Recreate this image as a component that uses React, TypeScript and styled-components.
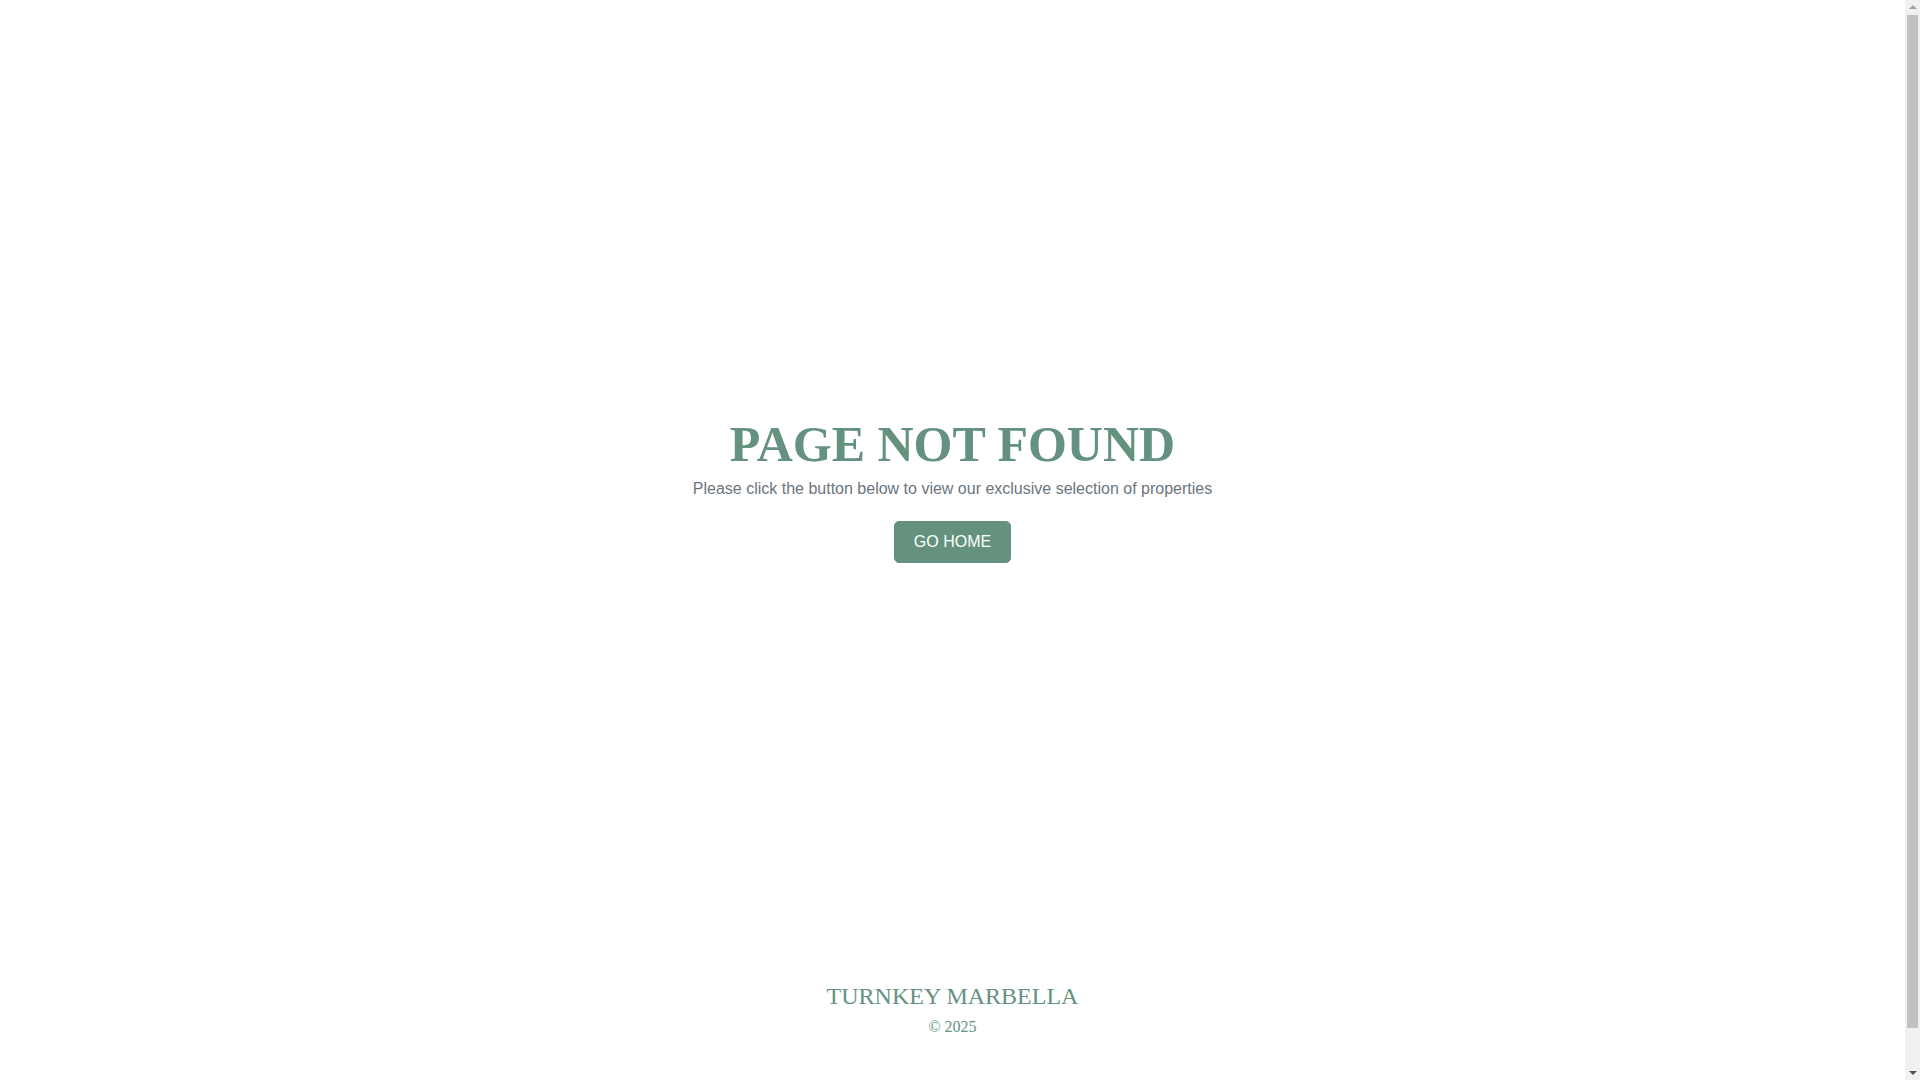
import styled, { createGlobalStyle } from "styled-components"

const GlobalStyle = createGlobalStyle`
    html, body {
        margin: 0;
        padding: 0;
        background: #ffffff;
    }
    body {
        font-family: "Liberation Sans", Arial, sans-serif;
        padding-right: 15px;
    }
`

const green = "#64927f"

const Page = styled.div`
    display: flex;
    flex-direction: column;
    min-height: 1120px;
`

const Main = styled.main`
    display: flex;
    flex-direction: column;
    align-items: center;
    padding: 414px 0 371px;
    text-align: center;
`

const Title = styled.h1`
    margin: 0;
    font-family: "Liberation Serif", "Times New Roman", serif;
    font-weight: 700;
    font-size: 50px;
    line-height: 1.2;
    color: ${green};
`

const Lead = styled.p`
    margin: 3px 0 20px;
    font-size: 16px;
    line-height: 24px;
    color: #6c757d;
`

const HomeButton = styled.a`
    display: inline-block;
    padding: 8px 19px;
    font-size: 16px;
    line-height: 24px;
    color: #ffffff;
    background: ${green};
    border: 1px solid ${green};
    border-radius: 5px;
    text-decoration: none;
    cursor: pointer;
`

const Footer = styled.footer`
    display: flex;
    flex-direction: column;
    align-items: center;
    padding: 48px 0 82px;
    font-family: "Liberation Serif", "Times New Roman", serif;
    color: ${green};
`

const Brand = styled.div`
    font-size: 24px;
    line-height: 1.2;
`

const Copy = styled.div`
    margin-top: 4px;
    font-size: 16px;
    line-height: 24px;
`

/* stand-in for the browser scrollbar seen in the screenshot */
const ScrollTrack = styled.div`
    position: fixed;
    top: 0;
    right: 0;
    bottom: 0;
    width: 15px;
    background: #f1f1f1;
    display: flex;
    flex-direction: column;
    align-items: center;
`

const Arrow = styled.div<{ $down?: boolean }>`
    width: 0;
    height: 0;
    margin: 5px 0;
    border-left: 4px solid transparent;
    border-right: 4px solid transparent;
    ${(p) => p.$down
        ? "border-top: 4px solid #505050;"
        : "border-bottom: 4px solid #a3a3a3;"}
`

const Thumb = styled.div`
    width: 11px;
    height: 1013px;
    background: #c1c1c1;
    margin-top: 1px;
    flex: none;
`

const Spacer = styled.div`
    flex: 1;
`

const App = () => {
    return <>
        <GlobalStyle />
        <Page>
            <Main>
                <Title>PAGE NOT FOUND</Title>
                <Lead>Please click the button below to view our exclusive selection of properties</Lead>
                <HomeButton href="#">GO HOME</HomeButton>
            </Main>
            <Footer>
                <Brand>TURNKEY MARBELLA</Brand>
                <Copy>© 2025</Copy>
            </Footer>
        </Page>
        <ScrollTrack>
            <Arrow />
            <Thumb />
            <Spacer />
            <Arrow $down />
        </ScrollTrack>
    </>
}

export default App
